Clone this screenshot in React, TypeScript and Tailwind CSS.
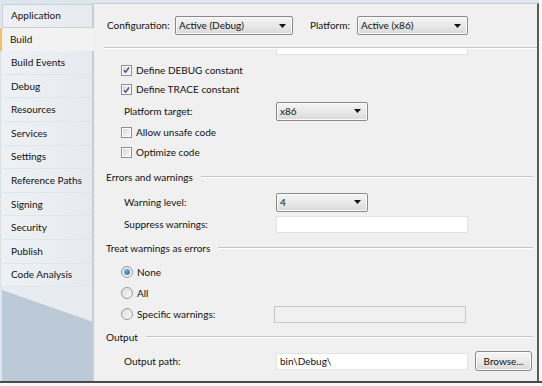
import React from "react";

const font = { fontFamily: "Lato, 'Liberation Sans', sans-serif" };

function Combo({ value, w }: { value: string; w: string }) {
  return (
    <div
      className={`${w} h-[19px] flex items-center justify-between rounded-[2px] border border-[#8a8a8a] bg-gradient-to-b from-[#f4f4f4] via-[#e9e9e9] to-[#d9d9d9] pl-[3px] pr-[6px] shadow-[inset_0_0_0_1px_#fbfbfb] shrink-0`}
    >
      <span className="text-[10px] text-[#111]">{value}</span>
      <svg width="7" height="4" viewBox="0 0 7 4">
        <polygon points="0,0 7,0 3.5,4" fill="#111" />
      </svg>
    </div>
  );
}

function TextBox({ value = "", disabled = false }: { value?: string; disabled?: boolean }) {
  return (
    <div
      className={`w-[192px] h-[17px] flex items-center pl-[3px] border shrink-0 ${
        disabled ? "bg-[#f0f0f0] border-[#c8c8c8]" : "bg-white border-[#e2e2e2]"
      }`}
    >
      <span className="text-[10px] text-[#111]">{value}</span>
    </div>
  );
}

function Check({ checked }: { checked: boolean }) {
  return (
    <div className="w-[11px] h-[11px] border border-[#8f8f8f] bg-white p-[1px] shrink-0">
      <div className="w-full h-full bg-gradient-to-br from-[#d9d9d9] to-[#f7f7f7] flex items-center justify-center">
        {checked && (
          <svg width="8" height="8" viewBox="0 0 8 8">
            <path d="M1 4.2 L3 6.4 L7 1" stroke="#3b4f8c" strokeWidth="1.6" fill="none" />
          </svg>
        )}
      </div>
    </div>
  );
}

function Radio({ checked }: { checked: boolean }) {
  return (
    <div className="w-[12px] h-[12px] rounded-full border border-[#9a9a9a] bg-gradient-to-br from-[#dcdcdc] to-[#fafafa] flex items-center justify-center shrink-0">
      {checked && <div className="w-[6px] h-[6px] rounded-full bg-gradient-to-br from-[#7ec3e3] to-[#1d6f9a]" />}
    </div>
  );
}

function Heading({ text, h }: { text: string; h: string }) {
  return (
    <div className={`${h} flex items-center pl-[12px] pr-[4px]`}>
      <span className="text-[10px] text-[#111] whitespace-nowrap">{text}</span>
      <div className="flex-1 ml-[8px] border-t border-[#c4c4c4] border-b-white border-b h-0" />
    </div>
  );
}

const tabs = [
  "Application",
  "Build",
  "Build Events",
  "Debug",
  "Resources",
  "Services",
  "Settings",
  "Reference Paths",
  "Signing",
  "Security",
  "Publish",
  "Code Analysis",
];

export default function App() {
  return (
    <div style={font} className="w-[542px] h-[386px] bg-[#f6f8fa] flex flex-col text-[#111] overflow-hidden">
      <div className="h-[383px] flex bg-[#dfe5ec] border-b-2 border-[#4a4a4a]">
        {/* Tabs column */}
        <div className="w-[93px] flex flex-col pt-[4px]">
          {tabs.map((t, i) => {
            if (i === 1) {
              return (
                <div key={t} className="h-[23.6px] flex items-center bg-[#f2f2f2] border-l-[2px] border-[#f2c35c] pl-[8px] -mr-[1px] z-10">
                  <span className="text-[10px]">{t}</span>
                </div>
              );
            }
            return (
              <div
                key={t}
                className={`h-[23.6px] flex items-center ml-[2px] pl-[8px] bg-gradient-to-r from-[#eef1f4] to-[#e6eaef] border-r border-[#c7ced6] ${
                  i === 0 ? "border border-[#c9d0d8] rounded-tl-[2px]" : "border-b border-b-[#e0e5ea] border-l border-l-[#f4f6f8]"
                }`}
              >
                <span className="text-[10px]">{t}</span>
              </div>
            );
          })}
          <div className="flex-1 relative ml-[2px] border-r border-[#c7ced6]">
            <svg className="w-full h-full block" viewBox="0 0 91 95" preserveAspectRatio="none">
              <polygon points="0,0 91,0 91,35 0,3" fill="#e8ecf0" />
              <polygon points="0,3 91,35 91,95 0,95" fill="#bccad8" />
            </svg>
          </div>
        </div>

        {/* Content */}
        <div className="w-[446px] mt-[3px] bg-[#f0f0f0] border-l border-t border-[#c7ced6] border-r-[2px] border-r-[#5a5a5a] flex flex-col">
          {/* header */}
          <div className="h-[43px] flex items-center pl-[13px] shrink-0">
            <span className="text-[10px] w-[68px] whitespace-nowrap">Configuration:</span>
            <Combo value="Active (Debug)" w="w-[118px]" />
            <span className="text-[10px] ml-[17px] w-[47px] whitespace-nowrap">Platform:</span>
            <Combo value="Active (x86)" w="w-[111px]" />
          </div>
          <div className="ml-[10px] border-t border-[#c8c8c8] border-b border-b-white shrink-0" />
          <div className="flex-1 overflow-hidden">
            <div className="-mt-[11px] flex flex-col">
              <div className="h-[17px] flex items-center pl-[30px]">
                <span className="text-[10px] w-[152px] -mt-[12px] whitespace-nowrap">Conditional compilation symbols:</span>
                <TextBox />
              </div>
              <div className="mt-[5px] h-[20px] flex items-center pl-[27px] gap-[4px]">
                <Check checked />
                <span className="text-[10px]">Define DEBUG constant</span>
              </div>
              <div className="h-[19px] flex items-center pl-[27px] gap-[4px]">
                <Check checked />
                <span className="text-[10px]">Define TRACE constant</span>
              </div>
              <div className="h-[24px] flex items-center pl-[30px]">
                <span className="text-[10px] w-[152px]">Platform target:</span>
                <Combo value="x86" w="w-[92px]" />
              </div>
              <div className="h-[18px] flex items-center pl-[27px] gap-[4px]">
                <Check checked={false} />
                <span className="text-[10px]">Allow unsafe code</span>
              </div>
              <div className="h-[22px] flex items-center pl-[27px] gap-[4px]">
                <Check checked={false} />
                <span className="text-[10px]">Optimize code</span>
              </div>
              <Heading text="Errors and warnings" h="h-[28px]" />
              <div className="h-[22px] flex items-center pl-[30px]">
                <span className="text-[10px] w-[152px]">Warning level:</span>
                <Combo value="4" w="w-[92px]" />
              </div>
              <div className="h-[22px] flex items-center pl-[30px]">
                <span className="text-[10px] w-[152px]">Suppress warnings:</span>
                <TextBox />
              </div>
              <Heading text="Treat warnings as errors" h="h-[26px]" />
              <div className="h-[22px] flex items-center pl-[27px] gap-[4px]">
                <Radio checked />
                <span className="text-[10px]">None</span>
              </div>
              <div className="h-[20px] flex items-center pl-[27px] gap-[4px]">
                <Radio checked={false} />
                <span className="text-[10px]">All</span>
              </div>
              <div className="h-[22px] flex items-center pl-[27px]">
                <Radio checked={false} />
                <span className="text-[10px] ml-[4px] w-[137px]">Specific warnings:</span>
                <TextBox disabled />
              </div>
              <Heading text="Output" h="h-[24px]" />
              <div className="h-[24px] flex items-center pl-[30px]">
                <span className="text-[10px] w-[152px]">Output path:</span>
                <TextBox value="bin\Debug\" />
                <div className="ml-[7px] w-[57px] h-[20px] rounded-[3px] border border-[#8a8a8a] bg-gradient-to-b from-[#f5f5f5] via-[#ebebeb] to-[#d8d8d8] flex items-center justify-center shadow-[inset_0_0_0_1px_#fcfcfc] shrink-0">
                  <span className="text-[10px]">Browse...</span>
                </div>
              </div>
            </div>
          </div>
        </div>
        <div className="flex-1 bg-[#f6f8fa]" />
      </div>
    </div>
  );
}
